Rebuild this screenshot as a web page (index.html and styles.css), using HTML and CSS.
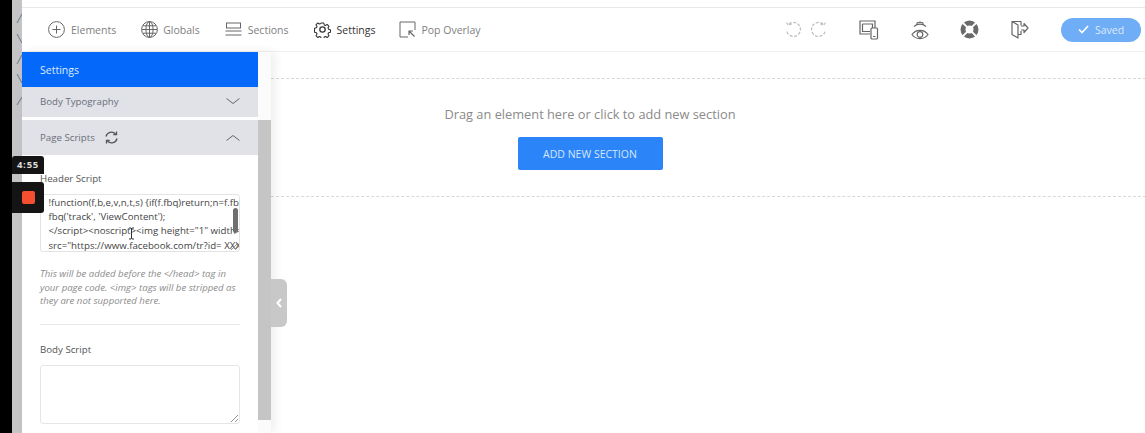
FILE: index.html
```html
<!DOCTYPE html>
<html lang="en">
<head>
<meta charset="utf-8">
<title>Page Editor Settings</title>
<link rel="stylesheet" href="styles.css">
</head>
<body>
<div class="app">
  <div class="rail-black"></div>
  <div class="rail-grey">
    <svg class="rail-marks" width="10" height="110" viewBox="0 0 10 110"><path d="M10 14 5 23M5 34l5 9M10 55l-5 9M5 74l5 9M10 97l-5 8" fill="none" stroke="#7d879a" stroke-width="1.200"/></svg>
  </div>
  <div class="workspace">
    <div class="topstrip"></div>
    <header class="toolbar">
      <nav class="tools">
        <a class="tool tool-elements"><svg class="ico" width="17" height="17" viewBox="0 0 17 17"><circle cx="8.500" cy="8.500" r="7.900" fill="none" stroke="#666" stroke-width="1"/><path d="M8.500 4.500v8M4.500 8.500h8" stroke="#666" fill="none"/></svg>Elements</a>
        <a class="tool tool-globals"><svg class="ico" width="17" height="17" viewBox="0 0 17 17"><g fill="none" stroke="#666" stroke-width="1"><circle cx="8.500" cy="8.500" r="7.900"/><ellipse cx="8.500" cy="8.500" rx="3.600" ry="7.900"/><path d="M8.500 1v15M1 8.500h15M2 4.800h13M2 12.200h13"/></g></svg>Globals</a>
        <a class="tool tool-sections"><svg class="ico" width="17" height="15" viewBox="0 0 17 15"><g fill="none" stroke="#666" stroke-width="1"><rect x="1.500" y="1" width="14" height="5"/><path d="M.5 9h16M.5 13h16"/></g></svg>Sections</a>
        <a class="tool tool-settings active"><svg class="ico" width="17" height="17" viewBox="0 0 24 24"><g fill="none" stroke="#333" stroke-width="1.800" stroke-linejoin="round"><circle cx="12" cy="12" r="3.800"/><path d="M9.800 1h4.400l.7 3.200 2.300 1 2.800-1.800 3.100 3.100-1.800 2.800 1 2.300 3.200.7v4.400l-3.200.7-1 2.300 1.800 2.800-3.100 3.100-2.800-1.800-2.300 1-.7 3.200H9.800l-.7-3.200-2.300-1-2.800 1.800-3.100-3.100 1.800-2.800-1-2.300-3.200-.7V9.800l3.200-.7 1-2.300L.9 4 4 .9l2.800 1.800 2.300-1z" transform="translate(2 2) scale(.833)"/></g></svg>Settings</a>
        <a class="tool tool-pop"><svg class="ico" width="17" height="17" viewBox="0 0 17 17"><g fill="none" stroke="#666" stroke-width="1"><path d="M16 9V1H1v15h8"/><path d="M15.500 15.500 10 10M10 14v-4h4" stroke-width="1.200"/></g></svg>Pop Overlay</a>
      </nav>
      <div class="actions">
        <span class="history">
          <svg width="17" height="17" viewBox="0 0 17 17"><path d="M4 3a7 7 0 1 1-2.500 6M1.500 1.500 3.500 4.500 6.500 3" fill="none" stroke="#bdbdbd" stroke-width="1.200" stroke-dasharray="3 1.600"/></svg>
          <svg width="17" height="17" viewBox="0 0 17 17"><path d="M13 3a7 7 0 1 0 2.500 6M15.500 1.500 13.500 4.500 10.500 3" fill="none" stroke="#bdbdbd" stroke-width="1.200" stroke-dasharray="3 1.600"/></svg>
        </span>
        <svg class="act act-device" width="20" height="20" viewBox="0 0 20 20"><g fill="none" stroke="#666" stroke-width="1.200"><path d="M11 14H1V1h15v7"/><path d="M3.500 4h10v4M3.500 4v7.500H11"/><rect x="12" y="8" width="6.500" height="11" rx="1" fill="#fff"/></g><path d="M14 16.500h2.500" stroke="#666"/></svg>
        <svg class="act act-eye" width="18" height="22" viewBox="0 0 18 22"><g fill="none" stroke="#666" stroke-width="1.200"><path d="M5.500 4.500a5 5 0 0 1 7 0M3 7.500a9 9 0 0 1 12 0" /><path d="M1 15.500c4-5.500 12-5.500 16 0-4 5.500-12 5.500-16 0z"/><circle cx="9" cy="15.500" r="2.800"/></g></svg>
        <svg class="act act-help" width="19" height="19" viewBox="0 0 19 19"><circle cx="9.500" cy="9.500" r="6.500" fill="none" stroke="#6a6a6a" stroke-width="5"/><path d="M3 3l4.200 4.200M16 3l-4.200 4.200M3 16l4.200-4.200M16 16l-4.200-4.200" stroke="#fff" stroke-width="1.800"/></svg>
        <svg class="act act-exit" width="19" height="19" viewBox="0 0 19 19"><g fill="none" stroke="#666" stroke-width="1.200" stroke-linejoin="round"><path d="M11 5.500V1.500H2v13l6 3.500V5L2 1.500"/><path d="M11 11v3.500H8M11 6h3V3.500l4 4.500-4 4.500V10h-3"/></g></svg>
        <button class="saved" type="button"><svg width="11" height="9" viewBox="0 0 11 9"><path d="M1 4.500 4 7.500 10 1" fill="none" stroke="#fff" stroke-width="1.600"/></svg>Saved</button>
      </div>
    </header>
    <div class="content">
      <aside class="panel">
        <div class="panel-body">
          <h2 class="panel-title">Settings</h2>
          <div class="accordion acc-typography">
            <span>Body Typography</span>
            <svg width="14" height="7" viewBox="0 0 14 7"><path d="M.5.500 7 5.500 13.500.500" fill="none" stroke="#666" stroke-width="1"/></svg>
          </div>
          <div class="accordion acc-scripts">
            <span class="acc-label">Page Scripts
              <svg class="sync" width="13" height="13" viewBox="0 0 13 13"><g fill="none" stroke="#555" stroke-width="1.300"><path d="M1 5.500A5.500 5.500 0 0 1 10.500 3M12 7.500A5.500 5.500 0 0 1 2.500 10"/><path d="M11.500.500v3.200H8.300M1.500 12.500V9.300h3.200"/></g></svg>
            </span>
            <svg width="14" height="7" viewBox="0 0 14 7"><path d="M.5 6.500 7 1.500 13.500 6.500" fill="none" stroke="#666" stroke-width="1"/></svg>
          </div>
          <div class="fields">
            <label class="field-label label-header">Header Script</label>
            <div class="code-box">
              <div class="code-line">!function(f,b,e,v,n,t,s) {if(f.fbq)return;n=f.fbq</div>
              <div class="code-line">fbq('track', 'ViewContent');</div>
              <div class="code-line">&lt;/script&gt;&lt;noscript&gt;&lt;img height="1" width="1"</div>
              <div class="code-line">src="https://www.facebook.com/tr?id= XXXX</div>
              <span class="code-thumb"></span>
              <svg class="grip" width="7" height="7" viewBox="0 0 7 7"><path d="M0 7 7 0M4 7l3-3" stroke="#777" stroke-width=".8"/></svg>
            </div>
            <p class="hint">This will be added before the &lt;/head&gt; tag in your page code. &lt;img&gt; tags will be stripped as they are not supported here.</p>
            <hr class="divider">
            <label class="field-label">Body Script</label>
            <div class="empty-box">
              <svg class="grip" width="7" height="7" viewBox="0 0 7 7"><path d="M0 7 7 0M4 7l3-3" stroke="#777" stroke-width=".8"/></svg>
            </div>
          </div>
        </div>
        <div class="scroll-col"><div class="scroll-bar"></div></div>
      </aside>
      <main class="canvas">
        <section class="dropzone">
          <p class="drop-text">Drag an element here or click to add new section</p>
          <button class="add-btn" type="button">ADD NEW SECTION</button>
        </section>
      </main>
    </div>
  </div>
  <div class="collapse-tab"><svg width="6" height="10" viewBox="0 0 6 10"><path d="M5 1 1.500 5 5 9" fill="none" stroke="#fff" stroke-width="2"/></svg></div>
  <div class="timer">4:55</div>
  <div class="rec"><span class="rec-dot"></span></div>
  <svg class="cursor" width="7" height="13" viewBox="0 0 7 13"><path d="M1 1h2l.5 1L4 1h2M3.500 2v9M1 12h2l.5-1 .5 1h2" fill="none" stroke="#333" stroke-width="1"/></svg>
</div>
</body>
</html>
```
FILE: styles.css
```css
* { box-sizing: border-box; }
html, body { margin: 0; padding: 0; }
body { width: 1145px; height: 433px; overflow: hidden; background: #fff; font-family: "Open Sans", "Noto Sans", sans-serif; color: #444; }
.app { position: relative; display: flex; width: 1145px; height: 433px; overflow: hidden; }
.rail-black { width: 12px; background: #000; flex: none; }
.rail-grey { width: 10px; background: #c4c4c6; flex: none; }
.rail-marks { display: block; }
.workspace { flex: 1; display: flex; flex-direction: column; min-width: 0; }
.topstrip { height: 8px; background: #fff; border-bottom: 1px solid #e8e8e8; flex: none; }
.toolbar { height: 44px; flex: none; display: flex; justify-content: space-between; align-items: center; border-bottom: 1px solid #f0f0f0; background: #fff; padding-left: 26px; padding-right: 4px; }
.tools { display: flex; align-items: center; font-size: 10.500px; color: #808080; }
.tool { display: flex; align-items: center; gap: 6px; }
.tool-globals { margin-left: 25px; gap: 5px; }
.tool-sections { margin-left: 25px; }
.tool-settings { margin-left: 25px; color: #333; }
.tool-pop { margin-left: 24px; gap: 5px; }
.ico { flex: none; display: block; }
.actions { display: flex; align-items: center; }
.history { display: flex; gap: 8px; }
.act { display: block; flex: none; }
.act-device { margin-left: 32px; }
.act-eye { margin-left: 32px; }
.act-help { margin-left: 31px; }
.act-exit { margin-left: 31px; }
.saved { margin-left: 32px; width: 80px; height: 24px; border: 0; border-radius: 12px; background: #6fadf6; color: #dcebfb; font: 10.500px "Open Sans", sans-serif; display: flex; align-items: center; justify-content: center; gap: 6px; padding: 0; }
.content { flex: 1; display: flex; min-height: 0; }
.panel { width: 249px; flex: none; display: flex; box-shadow: 4px 0 10px rgba(0,0,0,.07); position: relative; z-index: 1; }
.panel-body { width: 236px; flex: none; background: #fff; }
.panel-title { margin: 0; height: 35px; background: #0469fb; color: #dfeafd; font-weight: 400; font-size: 10.500px; line-height: 36px; padding-left: 18px; }
.accordion { display: flex; justify-content: space-between; align-items: center; background: #e0e2e8; font-size: 9.700px; color: #6b6f78; padding: 0 18px; }
.acc-typography { height: 30px; padding-bottom: 2px; }
.acc-scripts { height: 35px; margin-top: 3px; }
.acc-label { display: flex; align-items: center; gap: 10px; }
.sync { display: block; }
.fields { padding: 17px 18px 0; }
.field-label { display: block; font-size: 9.700px; line-height: 14px; color: #555; }
.label-header { margin-bottom: 8px; }
.code-box { position: relative; height: 58px; border: 1px solid #e3e3e3; border-radius: 3px; overflow: hidden; padding: 1px 0 0 7.500px; font-size: 9.700px; line-height: 14.200px; color: #444; white-space: nowrap; }
.code-line { height: 14.200px; }
.code-thumb { position: absolute; right: 1px; top: 13px; width: 5px; height: 25px; border-radius: 3px; background: #6f6f6f; }
.grip { position: absolute; right: 1px; bottom: 1px; display: block; }
.hint { margin: 15px 0 0; font-size: 9.600px; line-height: 13.700px; font-style: italic; color: #8c8c8c; }
.divider { border: 0; border-top: 1px solid #e8e8e8; margin: 16px 0 18px; }
.empty-box { position: relative; height: 59px; margin-top: 8px; border: 1px solid #e6e6e6; border-radius: 3px; }
.scroll-col { width: 13px; flex: none; background: #fbfbfb; padding-top: 68px; }
.scroll-bar { height: 300px; background: #c5c5c5; }
.canvas { flex: 1; padding-top: 26px; min-width: 0; }
.dropzone { height: 119px; width: 875px; padding-right: 236px; border-top: 1px dashed #d8d8d8; border-bottom: 1px dashed #d8d8d8; border-right: 1px dashed #d8d8d8; display: flex; flex-direction: column; align-items: center; }
.drop-text { margin: 26px 0 0; font-size: 12.800px; line-height: 18px; color: #8a8a8a; }
.add-btn { flex: none; margin: 14px 0 0; width: 145px; height: 33px; border: 0; border-radius: 2px; background: #2b85f8; color: #d7e7fd; font: 10.500px "Open Sans", sans-serif; padding: 0; }
.collapse-tab { position: absolute; left: 271px; top: 279px; width: 16px; height: 48px; border-radius: 0 6px 6px 0; background: #c8c8c8; display: flex; align-items: center; justify-content: center; z-index: 2; }
.timer { position: absolute; left: 12px; top: 156px; width: 32px; height: 18px; background: #141414; border-radius: 3px 3px 0 0; color: #ddd; font: 700 9.500px "Open Sans", sans-serif; letter-spacing: .8px; line-height: 18px; text-align: center; z-index: 3; }
.rec { position: absolute; left: 12px; top: 182px; width: 32px; height: 31px; background: #141414; border-radius: 0 3px 3px 0; display: flex; align-items: center; justify-content: center; z-index: 3; }
.rec-dot { width: 13px; height: 13px; border-radius: 2px; background: #f4502f; }
.cursor { position: absolute; left: 128px; top: 227px; z-index: 3; display: block; }
```
